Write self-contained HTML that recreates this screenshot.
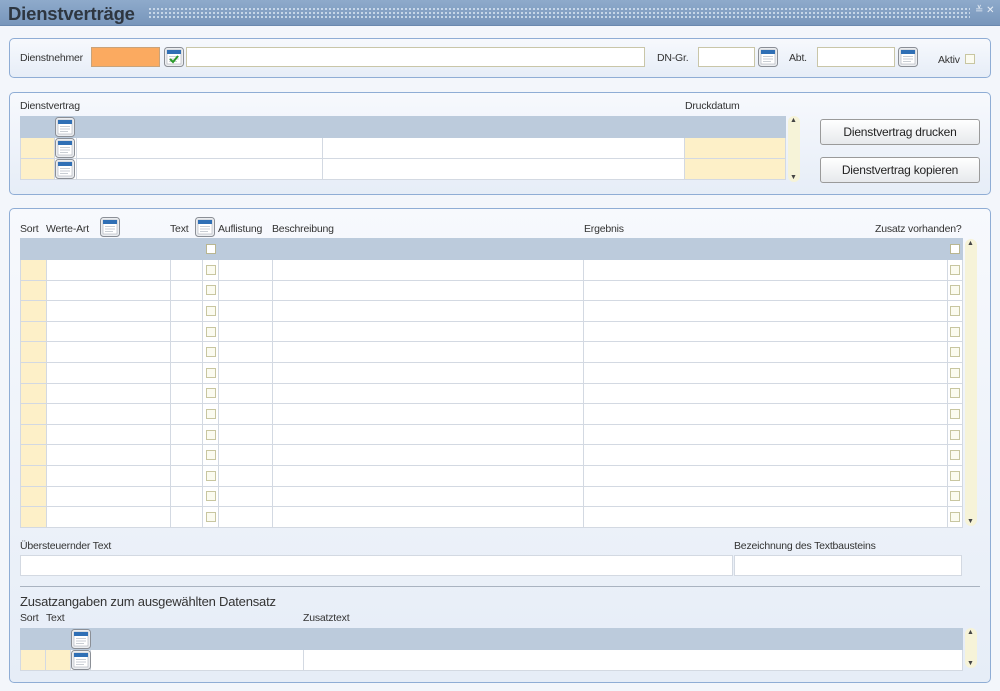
<!DOCTYPE html>
<html><head><meta charset="utf-8">
<style>
*{box-sizing:border-box;margin:0;padding:0}
body{width:1000px;height:691px;overflow:hidden;background:#f3f6fb;font-family:"Liberation Sans",sans-serif;font-size:10.5px;color:#333;position:relative}
.a{position:absolute}
.title{left:0;top:0;width:1000px;height:26px;background:linear-gradient(#8eaacb,#7896bb);border-bottom:1px solid #6a88ae}
.title h1{position:absolute;left:8px;top:3px;font-size:18.5px;font-weight:bold;color:#2e3640;letter-spacing:-0.2px}
.dots{left:148px;top:7px;width:822px;height:11px;background-image:radial-gradient(circle,#d9e6f2 0.9px,transparent 1.2px);background-size:4px 4px;opacity:.9}
.panel{border:1px solid #8fadd5;border-radius:5px;background:linear-gradient(#f7f9fd,#e6edf7)}
.inp{background:#fff;border:1px solid #c9c6a8}
.lbl{font-size:10.5px;color:#333;letter-spacing:-0.2px}
table{border-collapse:collapse;table-layout:fixed;position:absolute}
td{border:1px solid #d3d9e2;padding:0;height:20.6px;background:#fff}
tr.h td{background:#bccbdc;border-color:#bccbdc;height:21px}
td.c{background:#fdf0c8}
.cb{display:block;margin:0 auto;width:10px;height:10px;border:1px solid #c8c6a0;background:#fbfbf0}
tr.h .cb{background:#fff;border-color:#b9b690}
.sb{background:#f6f3d8;border-radius:6px;width:12px}
.sb:before{content:"▲";position:absolute;top:1px;left:2px;font-size:7px;color:#444}
.sb:after{content:"▼";position:absolute;bottom:1px;left:2px;font-size:7px;color:#444}
.btn{border:1px solid #9a9a9a;border-radius:3px;background:linear-gradient(#fff,#e7e9ec);font-size:12px;text-align:center;line-height:24px;color:#222;letter-spacing:-0.2px}
</style></head><body>
<svg width="0" height="0" style="position:absolute"><defs>
<symbol id="ic" viewBox="0 0 20 20"><rect x="0.5" y="0.5" width="19" height="19" rx="3" fill="#eceef1" stroke="#8b8f96"/><rect x="3" y="3" width="14" height="14" fill="#fff" stroke="#aab0b8" stroke-width=".6"/><rect x="3" y="3" width="14" height="4" fill="#2f6fb5"/><rect x="5" y="9" width="10" height="1" fill="#c9ced4"/><rect x="5" y="11.5" width="10" height="1" fill="#c9ced4"/><rect x="5" y="14" width="8" height="1" fill="#c9ced4"/></symbol>
</defs></svg>
<div class="a title"><h1>Dienstverträge</h1><div class="a dots"></div>
<div class="a" style="left:975px;top:5px;color:#e8eef6;font-size:10px">≚ ✕</div></div>

<div class="a panel" style="left:9px;top:38px;width:982px;height:40px"></div>
<div class="a lbl" style="left:20px;top:52px">Dienstnehmer</div>
<div class="a" style="left:91px;top:47px;width:69px;height:20px;background:#fbaa60;border:1px solid #c9a37a"></div>
<svg class="a" style="left:164px;top:47px" width="20" height="20"><use href="#ic"/><path d="M6 12l3 3 5-6" stroke="#2a9b2a" stroke-width="2" fill="none"/></svg>
<div class="a inp" style="left:186px;top:47px;width:459px;height:20px"></div>
<div class="a lbl" style="left:657px;top:52px">DN-Gr.</div>
<div class="a inp" style="left:698px;top:47px;width:57px;height:20px"></div>
<svg class="a" style="left:758px;top:47px" width="20" height="20"><use href="#ic"/></svg>
<div class="a lbl" style="left:789px;top:52px">Abt.</div>
<div class="a inp" style="left:817px;top:47px;width:78px;height:20px"></div>
<svg class="a" style="left:898px;top:47px" width="20" height="20"><use href="#ic"/></svg>
<div class="a lbl" style="left:938px;top:54px">Aktiv</div>
<div class="a cb" style="left:965px;top:54px"></div>

<div class="a panel" style="left:9px;top:92px;width:982px;height:103px"></div>
<div class="a lbl" style="left:20px;top:100px">Dienstvertrag</div>
<div class="a lbl" style="left:685px;top:100px">Druckdatum</div>
<table style="left:20px;top:116px;width:765px">
<col style="width:34px"><col style="width:22px"><col style="width:246px"><col style="width:362px"><col style="width:101px">
<tr class="h"><td></td><td><svg width="20" height="20" style="display:block"><use href="#ic"/></svg></td><td></td><td></td><td></td></tr>
<tr><td class="c"></td><td><svg width="20" height="20" style="display:block"><use href="#ic"/></svg></td><td></td><td></td><td class="c"></td></tr>
<tr><td class="c"></td><td><svg width="20" height="20" style="display:block"><use href="#ic"/></svg></td><td></td><td></td><td class="c"></td></tr>
</table>
<div class="a sb" style="left:788px;top:116px;height:66px"></div>
<div class="a btn" style="left:820px;top:119px;width:160px;height:26px">Dienstvertrag drucken</div>
<div class="a btn" style="left:820px;top:157px;width:160px;height:26px">Dienstvertrag kopieren</div>

<div class="a panel" style="left:9px;top:208px;width:982px;height:475px"></div>
<div class="a lbl" style="left:20px;top:223px">Sort</div>
<div class="a lbl" style="left:46px;top:223px">Werte-Art</div>
<svg class="a" style="left:100px;top:217px" width="20" height="20"><use href="#ic"/></svg>
<div class="a lbl" style="left:170px;top:223px">Text</div>
<svg class="a" style="left:195px;top:217px" width="20" height="20"><use href="#ic"/></svg>
<div class="a lbl" style="left:218px;top:223px">Auflistung</div>
<div class="a lbl" style="left:272px;top:223px">Beschreibung</div>
<div class="a lbl" style="left:584px;top:223px">Ergebnis</div>
<div class="a lbl" style="left:875px;top:223px">Zusatz vorhanden?</div>
<table style="left:20px;top:238px;width:942px">
<col style="width:26px"><col style="width:124px"><col style="width:32px"><col style="width:16px"><col style="width:54px"><col style="width:311px"><col style="width:364px"><col style="width:15px">
<tr class="h"><td></td><td></td><td></td><td><i class="cb"></i></td><td></td><td></td><td></td><td><i class="cb"></i></td></tr>
<tr><td class="c"></td><td></td><td></td><td><i class="cb"></i></td><td></td><td></td><td></td><td><i class="cb"></i></td></tr>
<tr><td class="c"></td><td></td><td></td><td><i class="cb"></i></td><td></td><td></td><td></td><td><i class="cb"></i></td></tr>
<tr><td class="c"></td><td></td><td></td><td><i class="cb"></i></td><td></td><td></td><td></td><td><i class="cb"></i></td></tr>
<tr><td class="c"></td><td></td><td></td><td><i class="cb"></i></td><td></td><td></td><td></td><td><i class="cb"></i></td></tr>
<tr><td class="c"></td><td></td><td></td><td><i class="cb"></i></td><td></td><td></td><td></td><td><i class="cb"></i></td></tr>
<tr><td class="c"></td><td></td><td></td><td><i class="cb"></i></td><td></td><td></td><td></td><td><i class="cb"></i></td></tr>
<tr><td class="c"></td><td></td><td></td><td><i class="cb"></i></td><td></td><td></td><td></td><td><i class="cb"></i></td></tr>
<tr><td class="c"></td><td></td><td></td><td><i class="cb"></i></td><td></td><td></td><td></td><td><i class="cb"></i></td></tr>
<tr><td class="c"></td><td></td><td></td><td><i class="cb"></i></td><td></td><td></td><td></td><td><i class="cb"></i></td></tr>
<tr><td class="c"></td><td></td><td></td><td><i class="cb"></i></td><td></td><td></td><td></td><td><i class="cb"></i></td></tr>
<tr><td class="c"></td><td></td><td></td><td><i class="cb"></i></td><td></td><td></td><td></td><td><i class="cb"></i></td></tr>
<tr><td class="c"></td><td></td><td></td><td><i class="cb"></i></td><td></td><td></td><td></td><td><i class="cb"></i></td></tr>
<tr><td class="c"></td><td></td><td></td><td><i class="cb"></i></td><td></td><td></td><td></td><td><i class="cb"></i></td></tr>
</table>
<div class="a sb" style="left:965px;top:239px;height:287px"></div>
<div class="a lbl" style="left:20px;top:540px">Übersteuernder Text</div>
<div class="a lbl" style="left:734px;top:540px">Bezeichnung des Textbausteins</div>
<div class="a" style="left:20px;top:555px;width:713px;height:21px;background:#fff;border:1px solid #d3d9e2"></div>
<div class="a" style="left:734px;top:555px;width:228px;height:21px;background:#fff;border:1px solid #d3d9e2"></div>
<div class="a" style="left:20px;top:586px;width:960px;height:1px;background:#a9b3c0"></div>
<div class="a" style="left:20px;top:594px;font-size:13px;color:#333;letter-spacing:-0.2px">Zusatzangaben zum ausgewählten Datensatz</div>
<div class="a lbl" style="left:20px;top:612px">Sort</div>
<div class="a lbl" style="left:46px;top:612px">Text</div>
<div class="a lbl" style="left:303px;top:612px">Zusatztext</div>
<table style="left:20px;top:628px;width:942px">
<col style="width:25px"><col style="width:25px"><col style="width:20px"><col style="width:213px"><col style="width:659px">
<tr class="h"><td></td><td></td><td><svg width="20" height="20" style="display:block"><use href="#ic"/></svg></td><td></td><td></td></tr>
<tr><td class="c"></td><td class="c"></td><td><svg width="20" height="20" style="display:block"><use href="#ic"/></svg></td><td></td><td></td></tr>
</table>
<div class="a sb" style="left:965px;top:628px;height:40px"></div>
</body></html>
